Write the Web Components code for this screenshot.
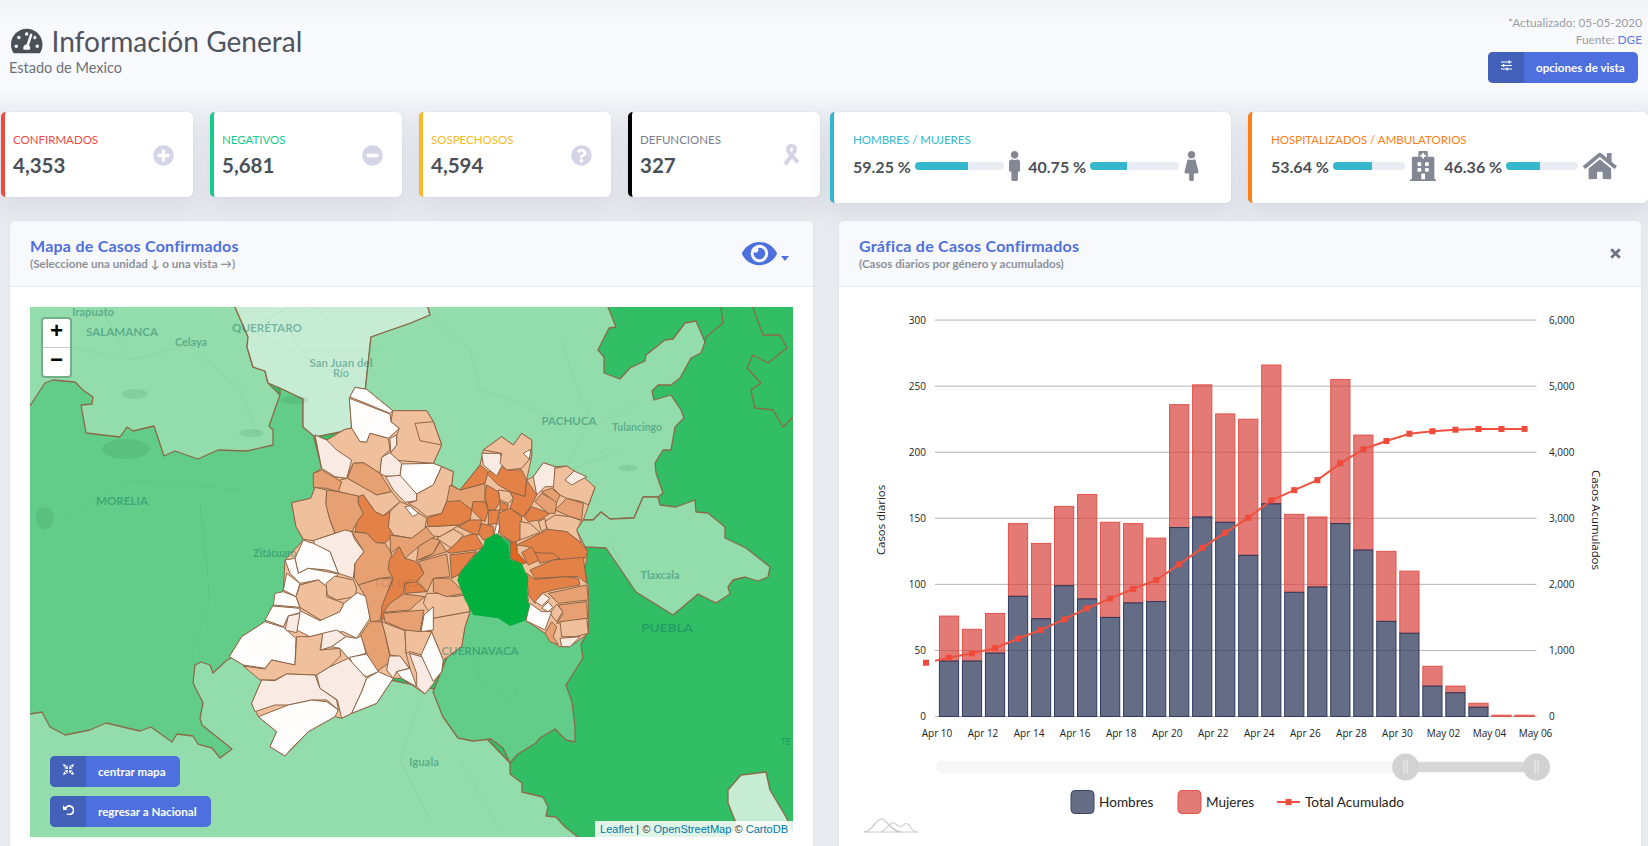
<!DOCTYPE html>
<html lang="es">
<head>
<meta charset="utf-8">
<title>Información General</title>
<style>
    html, body { margin: 0; height: 846px; overflow: hidden; }
    body {
        font-family: "Lato", "Noto Sans", sans-serif;
        color: #495057;
        background: linear-gradient(#f1f2f6 0, #f8f9fc 24px, #f9fafd 85px, #eff0f5 112px, #e8eaef 210px, #e8eaef 100%);
    }
</style>
</head>
<body>
<app-header></app-header>
<div id="cards" style="display:flex;align-items:flex-start;padding-left:1px;width:1647px">
    <stat-card label="CONFIRMADOS" value="4,353" color="#f0493e" icon="plus" style="margin-right:17px"></stat-card>
    <stat-card label="NEGATIVOS" value="5,681" color="#17c98b" icon="minus" style="margin-right:17px"></stat-card>
    <stat-card label="SOSPECHOSOS" value="4,594" color="#f7b924" icon="question" style="margin-right:17px"></stat-card>
    <stat-card label="DEFUNCIONES" value="327" color="#000" text="#7b7e8a" icon="ribbon" style="margin-right:10px"></stat-card>
    <ratio-card label="HOMBRES / MUJERES" color="#30b8d0" a="59.25" b="40.75" ia="male" ib="female" w="89" g2="8" pad="19" style="width:401px;margin-right:17px"></ratio-card>
    <ratio-card label="HOSPITALIZADOS / AMBULATORIOS" color="#fd7e14" a="53.64" b="46.36" ia="hospital" ib="home" w="72" g2="8" pad="19" style="width:400px"></ratio-card>
</div>
<div style="display:grid;grid-template-columns:803px 802px;column-gap:26px;padding:18px 0 0 10px">
    <panel-card heading="Mapa de Casos Confirmados" sub="(Seleccione una unidad ↓ o una vista →)" action="eye"><map-view></map-view></panel-card>
    <panel-card heading="Gráfica de Casos Confirmados" sub="(Casos diarios por género y acumulados)" action="close"><case-chart></case-chart></panel-card>
</div>

<script>
const ICONS = {
    gauge: ['0 0 576 512', 'M288 32C128.94 32 0 160.94 0 320c0 52.8 14.25 102.26 39.06 144.8 5.61 9.62 16.3 15.2 27.44 15.2h443c11.14 0 21.83-5.58 27.44-15.2C561.75 422.26 576 372.8 576 320c0-159.06-128.94-288-288-288zm0 64c14.71 0 26.58 10.13 30.32 23.65-1.11 2.26-2.64 4.23-3.45 6.67l-9.22 27.67c-5.13 3.49-10.97 6.01-17.64 6.01-17.67 0-32-14.33-32-32S270.33 96 288 96zM96 384c-17.67 0-32-14.33-32-32s14.33-32 32-32 32 14.33 32 32-14.33 32-32 32zm48-160c-17.67 0-32-14.33-32-32s14.33-32 32-32 32 14.33 32 32-14.33 32-32 32zm246.77-72.41l-61.33 184C343.13 347.33 352 364.54 352 384c0 11.72-3.38 22.55-8.88 32H232.88c-5.5-9.45-8.88-20.28-8.88-32 0-33.94 26.5-61.43 59.9-63.59l61.34-184.01c4.17-12.56 17.73-19.45 30.36-15.17 12.57 4.19 19.35 17.79 15.17 30.36zm14.66 57.2l15.52-46.55c3.47-1.29 7.13-2.23 11.05-2.23 17.67 0 32 14.33 32 32s-14.33 32-32 32c-11.38-.01-20.89-6.28-26.57-15.22zM480 384c-17.67 0-32-14.33-32-32s14.33-32 32-32 32 14.33 32 32-14.33 32-32 32z'],
    plus: ['0 0 512 512', 'M256 8C119 8 8 119 8 256s111 248 248 248 248-111 248-248S393 8 256 8zm144 276c0 6.6-5.4 12-12 12h-92v92c0 6.6-5.4 12-12 12h-56c-6.6 0-12-5.4-12-12v-92h-92c-6.6 0-12-5.4-12-12v-56c0-6.6 5.4-12 12-12h92v-92c0-6.6 5.4-12 12-12h56c6.6 0 12 5.4 12 12v92h92c6.6 0 12 5.4 12 12v56z'],
    minus: ['0 0 512 512', 'M256 8C119 8 8 119 8 256s111 248 248 248 248-111 248-248S393 8 256 8zM124 296c-6.6 0-12-5.4-12-12v-56c0-6.6 5.4-12 12-12h264c6.6 0 12 5.4 12 12v56c0 6.6-5.4 12-12 12H124z'],
    question: ['0 0 512 512', 'M504 256c0 136.997-111.043 248-248 248S8 392.997 8 256C8 119.083 119.043 8 256 8s248 111.083 248 248zM262.655 90c-54.497 0-89.255 22.957-116.549 63.758-3.536 5.286-2.353 12.415 2.715 16.258l34.699 26.31c5.205 3.947 12.621 3.008 16.665-2.122 17.864-22.658 30.113-35.797 57.303-35.797 20.429 0 45.698 13.148 45.698 32.958 0 14.976-12.363 22.667-32.534 33.976C247.128 238.528 216 254.941 216 296v4c0 6.627 5.373 12 12 12h56c6.627 0 12-5.373 12-12v-1.333c0-28.462 83.186-29.647 83.186-106.667 0-58.002-60.165-102-116.531-102zM256 338c-25.365 0-46 20.635-46 46 0 25.364 20.635 46 46 46s46-20.636 46-46c0-25.365-20.635-46-46-46z'],
    eye: ['0 0 576 512', 'M572.52 241.4C518.29 135.59 410.93 64 288 64S57.68 135.64 3.48 241.41a32.35 32.35 0 0 0 0 29.19C57.71 376.41 165.07 448 288 448s230.32-71.64 284.52-177.41a32.35 32.35 0 0 0 0-29.19zM288 400a144 144 0 1 1 144-144 143.93 143.93 0 0 1-144 144zm0-240a95.31 95.31 0 0 0-25.31 3.79 47.85 47.85 0 0 1-66.9 66.9A95.78 95.78 0 1 0 288 160z'],
    hospital: ['0 0 448 512', 'M448 492v20H0v-20c0-6.627 5.373-12 12-12h20V120c0-13.255 10.745-24 24-24h88V24c0-13.255 10.745-24 24-24h112c13.255 0 24 10.745 24 24v72h88c13.255 0 24 10.745 24 24v360h20c6.627 0 12 5.373 12 12zM308 192h-40c-6.627 0-12 5.373-12 12v40c0 6.627 5.373 12 12 12h40c6.627 0 12-5.373 12-12v-40c0-6.627-5.373-12-12-12zm-168 64h40c6.627 0 12-5.373 12-12v-40c0-6.627-5.373-12-12-12h-40c-6.627 0-12 5.373-12 12v40c0 6.627 5.373 12 12 12zm104 128h-40c-6.627 0-12 5.373-12 12v84h64v-84c0-6.627-5.373-12-12-12zm64-96h-40c-6.627 0-12 5.373-12 12v40c0 6.627 5.373 12 12 12h40c6.627 0 12-5.373 12-12v-40c0-6.627-5.373-12-12-12zm-116 12c0-6.627-5.373-12-12-12h-40c-6.627 0-12 5.373-12 12v40c0 6.627 5.373 12 12 12h40c6.627 0 12-5.373 12-12v-40zM182 96h26v26a6 6 0 0 0 6 6h20a6 6 0 0 0 6-6V96h26a6 6 0 0 0 6-6V70a6 6 0 0 0-6-6h-26V38a6 6 0 0 0-6-6h-20a6 6 0 0 0-6 6v26h-26a6 6 0 0 0-6 6v20a6 6 0 0 0 6 6z'],
    home: ['0 0 576 512', 'M280.37 148.26L96 300.11V464a16 16 0 0 0 16 16l112.06-.29a16 16 0 0 0 15.92-16V368a16 16 0 0 1 16-16h64a16 16 0 0 1 16 16v95.64a16 16 0 0 0 16 16.05L464 480a16 16 0 0 0 16-16V300L295.67 148.26a12.19 12.19 0 0 0-15.3 0zM571.6 251.47L488 182.56V44.05a12 12 0 0 0-12-12h-56a12 12 0 0 0-12 12v72.61L318.47 43a48 48 0 0 0-61 0L4.34 251.47a12 12 0 0 0-1.6 16.9l25.5 31A12 12 0 0 0 45.15 301l235.22-193.74a12.19 12.19 0 0 1 15.3 0L530.9 301a12 12 0 0 0 16.9-1.6l25.5-31a12 12 0 0 0-1.7-16.93z'],
    male: ['0 0 192 512', 'M96 0c35.346 0 64 28.654 64 64s-28.654 64-64 64-64-28.654-64-64S60.654 0 96 0m48 144h-11.36c-22.711 10.443-49.59 10.894-73.28 0H48c-26.51 0-48 21.49-48 48v136c0 13.255 10.745 24 24 24h16v136c0 13.255 10.745 24 24 24h64c13.255 0 24-10.745 24-24V352h16c13.255 0 24-10.745 24-24V192c0-26.51-21.49-48-48-48z'],
    female: ['0 0 256 512', 'M128 0c35.346 0 64 28.654 64 64s-28.654 64-64 64c-35.346 0-64-28.654-64-64S92.654 0 128 0m119.283 354.179l-48-192A24 24 0 0 0 176 144h-11.36c-22.711 10.443-49.59 10.894-73.28 0H80a24 24 0 0 0-23.283 18.179l-48 192C4.935 369.305 16.383 384 32 384h56v104c0 13.255 10.745 24 24 24h32c13.255 0 24-10.745 24-24V384h56c15.591 0 27.071-14.671 23.283-29.821z']
}

function icon(name, height, color) {
    const [box, d] = ICONS[name]
    const p = box.split(' ')
    return `<svg width="${height * p[2] / p[3]}" height="${height}" viewBox="${box}" style="display:block;flex:none"><path fill="${color}" d="${d}"/></svg>`
}

const RIBBON = `<svg width="19" height="22" viewBox="0 0 19 22" style="display:block"><path d="M3 20.5L11.5 9C14 5.5 13.5 2 9.5 2S5 5.5 7.5 9L16 18.5" fill="none" stroke="#d3d5e6" stroke-width="4"/></svg>`

class AppHeader extends HTMLElement {
    constructor() {
        super()
        this.attachShadow({ mode: 'open' })
        this.shadowRoot.innerHTML = `
        <style>
            :host { display: flex; justify-content: space-between; height: 112px; box-sizing: border-box; }
            .left { padding: 25px 0 0 9px; }
            h1 { display: flex; align-items: center; gap: 9px; margin: 0 0 0 2px; font-size: 28.1px; line-height: 32px; font-weight: 400; color: #4f555e; }
            .sub { font-size: 14.5px; line-height: 18px; margin-top: 2px; color: #6a7079; }
            .right { display: flex; flex-direction: column; align-items: flex-end; padding: 14px 6px 0 0; font-size: 11.8px; line-height: 17px; color: #9a9da6; }
            .right b { font-weight: 400; color: #5c7ce8; }
            icon-button { margin: 4px 4px 0 0; }
        </style>
        <div class="left">
            <h1>${icon('gauge', 28, '#495057')}<span>Información General</span></h1>
            <div class="sub">Estado de Mexico</div>
        </div>
        <div class="right">
            <div>*Actualizado: 05-05-2020</div>
            <div>Fuente: <b>DGE</b></div>
            <icon-button icon="sliders" width="150">opciones de vista</icon-button>
        </div>`
    }
}
customElements.define('app-header', AppHeader)

const BTN_ICONS = {
    sliders: `<path d="M0 2h11M0 5.5h11M0 9h11" stroke="#fff" stroke-width="1.1"/><path d="M7.5 .5h1.4v3H7.5zM2 4h1.4v3H2zM5.5 7.5h1.4v3H5.5z" fill="#fff"/>`,
    center: `<path d="M0 0l3.6 1.2L1.2 3.6zM11 0L7.4 1.2l2.4 2.4zM0 11l3.6-1.2-2.4-2.4zM11 11l-3.6-1.2 2.4-2.4z" fill="#fff"/><path d="M4.4 1.5l.6 3.5-3.5-.6zM6.6 1.5L6 5l3.5-.6zM4.4 9.5L5 6l-3.5.6zM6.6 9.5L6 6l3.5.6z" fill="#fff"/>`,
    undo: `<path d="M2 5.8A4.3 4.3 0 1 1 4 9.9" fill="none" stroke="#fff" stroke-width="1.7"/><path d="M0 1.2v4.6h4.6z" fill="#fff"/>`
}

class IconButton extends HTMLElement {
    constructor() {
        super()
        this.attachShadow({ mode: 'open' })
    }
    connectedCallback() {
        const w = this.getAttribute('width')
        this.shadowRoot.innerHTML = `
        <style>
            :host { display: block; width: ${w}px; height: 31px; }
            div { display: flex; height: 100%; border-radius: 5px; overflow: hidden; background: #4e70de; color: #fff;
                  font-size: 11.6px; font-weight: 700; align-items: center; white-space: nowrap; }
            i { display: flex; justify-content: center; align-items: flex-start; box-sizing: border-box; padding-top: 8px; width: 36px; height: 100%; background: #4361b9; margin-right: 12px; }
        </style>
        <div><i><svg width="11" height="11" viewBox="0 0 11 11">${BTN_ICONS[this.getAttribute('icon')]}</svg></i><slot></slot></div>`
    }
}
customElements.define('icon-button', IconButton)

class StatCard extends HTMLElement {
    constructor() {
        super()
        this.attachShadow({ mode: 'open' })
    }
    connectedCallback() {
        const color = this.getAttribute('color')
        const name = this.getAttribute('icon')
        const ic = name == 'ribbon' ? RIBBON : icon(name, 21, '#d3d5e6')
        this.shadowRoot.innerHTML = `
        <style>
            :host { display: flex; flex: none; box-sizing: border-box; width: 192px; height: 85px; background: #fff; border-radius: 5px;
                    border-left: 4px solid ${color}; box-shadow: 0 8px 24px rgba(60,70,110,.10), 0 0 1px rgba(60,70,110,.3); align-items: center;
                    justify-content: space-between; padding: 0 19px 0 8px; }
            .label { font-size: 11.5px; line-height: 14px; color: ${this.getAttribute('text') || color}; }
            .value { font-size: 20.5px; line-height: 24px; font-weight: 700; margin-top: 6px; color: #495057; }
            .ic { margin-top: 1px; }
        </style>
        <div><div class="label">${this.getAttribute('label')}</div><div class="value">${this.getAttribute('value')}</div></div>
        <div class="ic">${ic}</div>`
    }
}
customElements.define('stat-card', StatCard)

class RatioCard extends HTMLElement {
    constructor() {
        super()
        this.attachShadow({ mode: 'open' })
    }
    part(value, ic, w, gap) {
        return `<span class="pct">${value} %</span>
        <span class="bar" style="width:${w}px"><span style="width:${value}%"></span></span>
        <span style="margin:0 ${gap}px 0 5px">${icon(ic, 30, '#848794')}</span>`
    }
    connectedCallback() {
        const color = this.getAttribute('color')
        const w = this.getAttribute('w')
        this.shadowRoot.innerHTML = `
        <style>
            :host { display: block; flex: none; box-sizing: border-box; height: 91px; background: #fff; border-radius: 5px;
                    border-left: 4px solid ${color}; box-shadow: 0 8px 24px rgba(60,70,110,.10), 0 0 1px rgba(60,70,110,.3);
                    padding: 21px 0 0 ${this.getAttribute('pad')}px; }
            .label { font-size: 11.5px; line-height: 14px; color: ${color}; }
            .row { display: flex; align-items: center; margin-top: 1px; height: 36px; }
            .pct { font-size: 16px; font-weight: 700; color: #495057; width: 57px; white-space: nowrap; }
            .bar { display: block; height: 8px; margin-left: 5px; border-radius: 4px; background: #e9ecf3; overflow: hidden; flex: none; }
            .bar span { display: block; height: 100%; background: #35b8cd; }
        </style>
        <div class="label">${this.getAttribute('label')}</div>
        <div class="row">
            ${this.part(this.getAttribute('a'), this.getAttribute('ia'), w, this.getAttribute('g2'))}
            ${this.part(this.getAttribute('b'), this.getAttribute('ib'), w, 0)}
        </div>`
    }
}
customElements.define('ratio-card', RatioCard)

class PanelCard extends HTMLElement {
    constructor() {
        super()
        this.attachShadow({ mode: 'open' })
    }
    connectedCallback() {
        const action = this.getAttribute('action') == 'eye'
            ? `<div class="act eye">${icon('eye', 31, '#4e6fde')}<svg width="8" height="5" viewBox="0 0 8 5" style="margin:18px 0 0 4px"><path d="M0 0h8L4 5z" fill="#4e6fde"/></svg></div>`
            : `<div class="act close"><svg width="11" height="11" viewBox="0 0 11 11"><path d="M1.2 1.2l8.6 8.6M9.8 1.2L1.2 9.8" stroke="#6f7482" stroke-width="2.8"/></svg></div>`
        this.shadowRoot.innerHTML = `
        <style>
            :host { display: block; background: #fff; border-radius: 5px 5px 0 0; box-shadow: 0 0 1px rgba(60,70,110,.3); height: 625px; overflow: hidden; }
            header { display: flex; justify-content: space-between; align-items: center; box-sizing: border-box; height: 66px; padding: 0 20px; background: #f8f9fd; border-bottom: 1px solid #e4e6f0; }
            h2 { margin: 0; font-size: 16px; line-height: 18px; font-weight: 700; color: #4e6fde; letter-spacing: .25px; }
            p { margin: 2px 0 0; font-size: 11.6px; line-height: 14px; font-weight: 700; color: #8e9198; }
            .act { display: flex; }
            .eye { margin: 0 4px 0 0; }
        </style>
        <header><div><h2>${this.getAttribute('heading')}</h2><p>${this.getAttribute('sub')}</p></div>${action}</header>
        <slot></slot>`
    }
}
customElements.define('panel-card', PanelCard)

const w = '#fefdfc', p = '#f9ebe3', l = '#f0bf9c', m = '#e6a071', d = '#e38146', x = '#e0651f'

// municipios, coordenadas del recorte 1200x1200 que empieza en (220,370)
const MUNICIPIOS = [
    [w,'405,52 440,58 518,122 510,130 400,85 390,80'],
    [w,'388,85 510,132 513,155 538,175 505,205 450,190 440,217 420,215 395,175'],
    [l,'518,122 620,122 640,155 665,225 640,280 520,270 512,248 530,225 530,195 538,175 513,155'],
    [l,'585,160 640,155 665,225 600,212'],
    [l,'320,210 375,178 395,175 420,215 440,217 450,190 505,205 510,240 485,262 480,310 430,278 400,280 380,325 345,320'],
    [p,'285,195 320,210 350,240 395,270 380,325 345,320 305,295'],
    [p,'510,205 530,195 530,225 512,248'],
    [p,'510,248 545,280 540,320 495,318 480,310 485,262'],
    [w,'545,282 640,280 665,290 640,345 590,372 540,320'],
    [p,'497,320 540,316 590,372 590,392 555,397 520,360'],
    [l,'665,290 700,305 695,345 680,395 665,430 620,440 590,415 565,400 590,392 590,372 640,345'],
    [m,'400,280 430,278 480,310 515,365 470,375 382,325'],
    [l,'360,330 382,325 470,375 515,365 540,395 490,437 465,425 430,375 415,380 355,365'],
    [m,'280,310 305,300 365,335 355,365 320,355 280,352'],
    [l,'215,398 272,385 285,352 320,360 318,400 330,450 345,490 280,512 250,508 228,470'],
    [m,'320,360 355,365 415,378 415,400 430,430 410,460 395,485 345,488 330,450 318,405'],
    [d,'415,380 430,375 465,425 490,437 510,425 520,430 505,470 520,495 495,520 468,518 440,490 405,485 410,458 430,430 415,400'],
    [l,'510,425 540,395 565,405 590,425 620,445 615,475 575,505 520,495 505,470'],
    [w,'555,410 570,408 595,430 578,440'],
    [p,'280,512 345,490 375,480 395,485 405,510 432,545 405,580 400,625 355,610 330,545 285,525'],
    [w,'262,515 280,520 330,545 355,610 320,600 265,595 235,610 225,565 250,510'],
    [m,'395,485 440,490 468,518 495,520 515,550 505,600 520,620 480,625 415,645 403,625 405,580 432,545'],
    [w,'195,570 225,565 235,610 265,595 320,605 355,612 320,650 295,630 240,640 210,610'],
    [w,'200,610 240,640 228,680 190,660'],
    [w,'165,670 190,665 228,680 240,712 160,705'],
    [l,'228,680 240,645 295,630 320,650 320,680 345,690 372,700 360,725 305,752 240,712'],
    [l,'318,640 345,618 400,630 410,655 405,680 350,690 322,675'],
    [w,'230,780 235,735 240,722 300,752 360,725 372,700 412,668 440,680 450,745 410,805 370,785 310,790 270,800'],
    [w,'158,708 240,715 240,728 205,738 190,770 135,750'],
    [p,'205,738 240,730 230,788 195,780'],
    [w,'28,860 65,800 135,755 190,772 228,805 225,885 155,870 135,895 70,885'],
    [l,'70,888 135,897 155,870 225,885 230,800 270,800 310,790 300,840 360,835 362,858 330,890 290,915 200,912 165,930 120,930'],
    [p,'308,790 350,780 378,800 335,830 302,840'],
    [w,'378,800 410,805 425,797 438,850 385,865 360,835 335,830'],
    [m,'450,755 485,755 495,790 510,860 505,880 470,905 440,850 422,795'],
    [l,'485,755 555,782 558,850 570,895 540,860 510,855 495,790'],
    [l,'555,780 635,785 605,855 570,845 558,850'],
    [w,'388,862 440,852 475,905 440,920 408,900'],
    [p,'508,858 540,858 568,895 530,905 520,925 500,900'],
    [p,'568,850 605,860 645,935 615,972 590,950 590,910'],
    [w,'635,785 670,870 665,905 640,935 603,855'],
    [w,'530,905 570,895 590,950 545,925'],
    [p,'125,930 165,932 200,912 285,915 300,955 350,990 355,1020 320,990 275,990 205,1005 165,1005 105,1025 95,1000'],
    [p,'290,915 330,890 385,865 440,925 425,965 395,1030 365,1045 352,990 300,955'],
    [w,'440,925 475,905 520,925 470,1000 395,1030 425,965'],
    [w,'115,1040 205,1005 275,990 320,995 355,1020 345,1040 265,1085 215,1135 195,1158 150,1130 170,1085'],
    [m,'415,645 480,625 518,625 490,700 480,752 452,755 437,680'],
    [d,'508,570 538,530 555,565 590,575 612,610 585,640 555,640 550,670 515,700 485,755 485,710 520,625 505,600'],
    [d,'555,640 590,635 620,665 555,670'],
    [m,'510,700 550,672 615,680 590,700 570,720 490,727'],
    [m,'490,730 612,720 600,785 555,780 495,755'],
    [l,'620,670 660,670 700,680 740,675 750,725 640,745 610,700'],
    [l,'640,745 750,725 735,770 725,830 670,870 635,785 640,760'],
    [w,'612,735 640,710 640,780 603,785'],
    [m,'640,625 690,625 735,670 680,680 640,665'],
    [m,'595,575 680,552 690,620 640,625 622,665 590,635 612,610'],
    [m,'510,495 575,505 620,470 645,500 595,530 555,565 538,530 512,550'],
    [m,'595,530 635,505 660,510 640,550 590,572'],
    [m,'640,550 660,515 680,545 600,570'],
    [l,'618,470 720,465 660,500 640,498'],
    [l,'650,505 700,478 730,495 695,535'],
    [d,'680,545 730,500 765,490 790,530 770,540 690,550'],
    [d,'690,555 770,545 750,570 715,615 695,625'],
    [d,'620,445 665,430 680,395 720,390 755,420 750,450 715,465 625,470'],
    [m,'680,395 690,345 720,360 795,340 795,400 760,395 755,420 720,392'],
    [d,'720,360 780,285 805,305 795,340'],
    [d,'715,470 750,450 785,450 775,495 755,490'],
    [d,'755,420 760,395 795,395 805,420 795,455 785,450'],
    [d,'775,490 785,460 820,470 820,505 790,510'],
    [w,'820,505 830,460 840,465 835,490'],
    [d,'800,310 840,285 860,300 905,300 920,330 915,380 870,365 835,345'],
    [p,'785,250 840,250 850,280 830,318 790,285'],
    [l,'790,240 845,200 880,225 905,190 935,210 935,260 905,295 860,300 840,280 845,250'],
    [w,'910,250 932,238 928,268'],
    [l,'835,360 870,365 880,385 865,400 840,390'],
    [d,'870,365 915,380 920,330 950,375 935,405 910,440 870,415 880,385'],
    [d,'800,345 835,365 840,395 825,420 805,420 795,380'],
    [d,'840,395 865,405 860,420 840,420'],
    [d,'805,422 840,420 830,460 805,465'],
    [d,'835,430 870,415 905,440 900,510 880,518 840,490'],
    [x,'872,515 890,518 892,548 920,578 905,582 872,565'],
    [l,'900,455 930,460 960,487 900,510'],
    [l,'955,455 975,445 980,475 965,485'],
    [d,'912,440 935,410 990,430 960,450 925,455'],
    [m,'945,395 965,370 1010,395 1005,430 985,430'],
    [m,'965,365 995,355 1020,375 1010,398'],
    [p,'940,320 970,278 1005,290 1005,350 975,350 950,375'],
    [l,'1005,295 1040,288 1090,320 1125,352 1105,405 1085,395 1040,385 1020,375 1000,355'],
    [p,'1035,330 1062,303 1100,320 1055,345'],
    [m,'1005,420 1040,385 1090,400 1085,450 1050,440'],
    [l,'975,455 1005,435 1050,440 1085,452 1070,480 1085,520 1040,485 985,480 980,470'],
    [d,'890,525 960,490 985,478 1040,485 1085,520 1103,545 1095,565 1020,570 960,550 945,548 925,530'],
    [d,'905,548 935,530 958,570 925,585'],
    [d,'945,548 1000,550 1020,565 960,580'],
    [d,'930,600 1000,570 1090,562 1100,640 1075,620 1040,620 945,625'],
    [d,'920,610 945,628 1040,620 1075,625 1080,645 1000,660 965,670 945,700 925,675'],
    [m,'985,670 1100,645 1105,690 1015,700'],
    [m,'1015,705 1100,695 1103,745 1040,755 1010,760 1030,730'],
    [l,'1020,755 1100,745 1105,790 1065,800 1025,800'],
    [p,'1020,805 1080,800 1050,830 1025,830'],
    [m,'995,755 1010,770 1000,800 1015,825 990,815 975,790'],
    [l,'1010,702 1028,725 1010,755 990,730'],
    [w,'930,700 965,725 995,725 975,780 918,752'],
    [p,'968,670 990,685 965,708 945,695'],
    [w,'965,715 985,695 998,712 985,725']
]
const EDOMEX = '405,52 440,58 518,122 620,122 640,155 665,225 640,280 665,290 700,305 695,345 720,360 780,285 790,240 845,200 880,225 905,190 935,210 935,260 920,330 940,320 970,278 1005,290 1040,288 1125,352 1090,450 1070,480 1103,545 1095,600 1105,650 1105,790 1050,830 1015,830 975,790 918,752 925,690 905,582 872,515 830,490 790,530 750,570 715,615 750,725 735,770 725,830 670,870 665,905 615,972 545,925 520,925 470,1000 395,1030 365,1045 345,1040 265,1085 195,1158 150,1130 170,1085 115,1040 95,1000 125,930 70,885 28,860 65,800 135,755 160,705 190,660 195,570 250,510 228,470 215,398 272,385 285,352 280,310 305,295 285,195 320,210 375,178 395,175 388,85'
const CDMX = '830,490 865,525 870,570 905,580 925,625 920,690 930,705 915,752 870,768 835,745 760,735 735,690 712,630 725,600 755,570 790,530 795,508'

// estados vecinos, en coordenadas de pagina
const ESTADOS = [
    ['#93dcab','20,700 200,650 240,650 440,690 510,763 510,774 522,783 522,792 543,797 548,807 546,816 556,817 565,827 578,837 590,847 20,847'],
    ['#62cd88','433,692 443,717 458,738 473,741 491,739 503,748 510,763 518,754 536,743 540,738 555,729 566,740 575,742 575,727 572,702 566,685 583,658 581,645 586,635 586,600 470,600'],
    ['#93dcab','20,297 235,297 235,307 248,337 247,347 253,367 265,371 268,383 280,395 300,460 20,460'],
    ['#62cd88','20,406 30,406 45,383 53,380 75,382 83,390 93,397 92,404 81,405 86,433 120,437 127,427 133,431 154,426 164,456 175,451 198,459 218,450 247,451 273,445 273,430 269,426 280,395 280,388 303,399 303,427 313,433 322,470 330,560 300,620 227,660 213,673 210,665 201,662 195,665 193,683 203,703 200,718 202,725 232,749 220,758 212,748 198,744 193,736 177,734 172,742 151,727 140,731 106,723 90,730 65,735 50,727 42,712 30,714 20,716'],
    ['#c6ecd4','235,297 428,297 428,307 430,315 411,323 371,337 365,392 350,430 315,437 303,427 303,399 280,388 268,383 265,371 253,367 247,347 248,337 235,307'],
    ['#93dcab','428,297 608,297 608,307 616,327 609,328 598,350 604,357 604,373 620,379 630,368 645,361 646,355 665,340 673,339 685,323 696,321 705,342 701,353 691,358 680,378 671,385 658,385 652,391 654,400 671,395 681,410 684,418 675,427 671,450 663,450 655,463 656,473 663,493 658,497 643,497 634,518 610,519 601,512 593,520 583,520 560,530 470,540 345,470 365,392 371,337 411,323 430,315 428,307'],
    ['#93dcab','576,527 583,520 593,520 601,512 610,519 634,518 643,497 658,497 660,505 676,507 695,500 696,512 708,513 725,527 725,538 746,548 770,567 768,577 758,581 745,577 733,580 728,587 730,594 716,603 698,594 673,615 636,592 621,570 606,548 586,547 560,540'],
    ['#c6ecd4','728,790 741,775 766,772 770,790 786,817 800,845 725,845 736,823 728,803']
]
const LIMITES = [
    '720,300 723,323 706,337 705,342',
    '750,300 763,335 780,335 787,348 768,363 753,355 747,368 761,383 751,390 755,408 773,410 783,427 800,410'
]
const CAMINOS = [
    '100,307 130,360 190,345 240,390 260,440', '40,340 130,360', '250,330 330,370 365,392', '280,310 300,350 380,350',
    '430,315 470,350 480,390 510,400 590,430 640,400', '560,340 590,420 560,480', '620,450 570,470', '610,540 650,640',
    '470,640 480,680 510,700 540,660', '60,520 130,480 240,490', '200,500 210,600 190,660', '420,700 400,760 430,820', '460,760 500,830',
    '640,640 720,690 670,740', '330,320 300,300 250,330'
]
const LAGOS = [[135,394,13,5],[126,449,24,10],[45,518,9,11],[295,400,14,4],[251,433,12,4],[628,468,10,3]]
const ETIQUETAS = [
    ['Irapuato',93,315.5,42,10.5],['SALAMANCA',122,336,72,11],['Celaya',191,346,32,11],['QUERÉTARO',267,332,70,11],
    ['San Juan del',341,367,63,11],['Río',341,377,16,11],['MORELIA',122,505,52,11],['Zitácuaro',275,557,43,10.5],
    ['PACHUCA',569,425,55,11],['Tulancingo',637,431,50,10.5],['Tlaxcala',660,579,39,10.5],['PUEBLA',667,632,52,12],
    ['CUERNAVACA',480,655,77,11],['Iguala',424,766,30,10.5],['TE',786,745,10,10]
]

class MapView extends HTMLElement {
    constructor() {
        super()
        this.attachShadow({ mode: 'open' })
    }
    connectedCallback() {
        const poly = (pts, fill) => `<polygon points="${pts}" fill="${fill}"/>`
        const states = ESTADOS.map(s => poly(s[1], s[0])).join('')
        const limits = LIMITES.map(s => `<polyline points="${s}" fill="none"/>`).join('')
        const roads = CAMINOS.map(s => `<polyline points="${s}"/>`).join('')
        const lakes = LAGOS.map(a => `<ellipse cx="${a[0]}" cy="${a[1]}" rx="${a[2]}" ry="${a[3]}"/>`).join('')
        const munis = MUNICIPIOS.map(s => poly(s[1], s[0])).join('')
        const labels = ETIQUETAS.map(t => `<text x="${t[1]}" y="${t[2]}" font-size="${t[4]}" textLength="${t[3]}" lengthAdjust="spacingAndGlyphs">${t[0]}</text>`).join('')
        this.shadowRoot.innerHTML = `
        <style>
            :host { display: block; padding: 20px; }
            .map { position: relative; width: 763px; height: 530px; overflow: hidden; background: #31be65; }
            svg { display: block; }
            .zoom { position: absolute; left: 11px; top: 10px; width: 27px; border: 2px solid rgba(0,0,0,.2); border-radius: 4px; background: #fff; background-clip: padding-box; }
            .zoom div { height: 28px; text-align: center; font: 700 22px/27px "Liberation Mono", monospace; color: #000; }
            .zoom div + div { border-top: 1px solid #ccc; }
            .btns { position: absolute; left: 20px; top: 449px; display: flex; flex-direction: column; gap: 9px; }
            .attr { position: absolute; right: 0; bottom: 0; box-sizing: border-box; width: 198px; height: 16px; padding-left: 5px; background: rgba(255,255,255,.85); font: 11.05px/16px "Liberation Sans", sans-serif; color: #333; white-space: nowrap; }
            .attr a { color: #0078a8; }
        </style>
        <div class="map">
            <svg width="763" height="530" viewBox="30 307 763 530">
                <g stroke="#8b6a4a" stroke-width="1.3" stroke-linejoin="round">${states}${limits}</g>
                <g fill="none" stroke="rgba(0,70,60,.05)" stroke-width="1">${roads}</g>
                <g fill="rgba(0,70,60,.09)">${lakes}</g>
                <g transform="translate(220,370) scale(.33333)" stroke-linejoin="round" stroke="#8e6546" stroke-width="3">
                    ${poly(EDOMEX, l)}
                    <g>${munis}</g>
                    ${poly(CDMX, '#02b03f').replace('<polygon', '<polygon stroke="none"')}
                </g>
                <g font-family="Lato, 'Noto Sans', sans-serif" font-weight="700" text-anchor="middle" fill="rgba(15,115,100,.45)">${labels}
                    <text x="398" y="587" font-size="11" textLength="50" lengthAdjust="spacingAndGlyphs" fill="rgba(120,80,50,.16)">TOLUCA</text>
                </g>
            </svg>
            <div class="zoom"><div>+</div><div>−</div></div>
            <div class="btns">
                <icon-button icon="center" width="130">centrar mapa</icon-button>
                <icon-button icon="undo" width="161">regresar a Nacional</icon-button>
            </div>
            <div class="attr"><a>Leaflet</a> | © <a>OpenStreetMap</a> © <a>CartoDB</a></div>
        </div>`
    }
}
customElements.define('map-view', MapView)

const TOTALES = [76,66,78,146,131,159,168,147,146,135,236,251,229,225,266,153,151,255,213,125,110,38,23,10,1,1]
const HOMBRES = [42,42,48,91,74,99,89,75,86,87,143,151,147,122,161,94,98,146,126,72,63,23,18,7,0,0]

class CaseChart extends HTMLElement {
    constructor() {
        super()
        this.attachShadow({ mode: 'open' })
    }
    connectedCallback() {
        const y0 = 716.5, k = 396.4 / 300, step = 23.02, left = 949
        let out = ''
        // rejilla y ejes
        for (let i = 0; i <= 6; i++) {
            const y = y0 - i * 66.07
            out += `<line x1="935" x2="1536.5" y1="${y}" y2="${y}" stroke="#b4b4b4"/>`
            out += `<text x="926" y="${y + 3.5}" text-anchor="end">${i * 50}</text>`
            out += `<text x="1549" y="${y + 3.5}">${(i * 1000).toLocaleString('en-US')}</text>`
        }
        const meses = ['Apr 10','Apr 12','Apr 14','Apr 16','Apr 18','Apr 20','Apr 22','Apr 24','Apr 26','Apr 28','Apr 30','May 02','May 04','May 06']
        meses.forEach((m, i) => {
            out += `<text x="${937 + i * 46.04}" y="737" text-anchor="middle">${m}</text>`
        })
        out += `<text transform="translate(885,520) rotate(-90)" text-anchor="middle" font-size="11.4">Casos diarios</text>`
        out += `<text transform="translate(1592,520) rotate(90)" text-anchor="middle" font-size="11.4">Casos Acumulados</text>`
        // barras
        TOTALES.forEach((t, i) => {
            const x = left + i * step - 9.6
            const h = HOMBRES[i] * k
            const top = t * k
            if (t - HOMBRES[i] > 0) out += `<rect x="${x}" y="${y0 - top}" width="19.2" height="${top - h}" fill="rgba(217,65,60,.7)" stroke="#e2524a" stroke-width="1"/>`
            if (h > 0) out += `<rect x="${x}" y="${y0 - h}" width="19.2" height="${h}" fill="rgba(58,68,100,.78)" stroke="#2f3a5e" stroke-width="1"/>`
        })
        // acumulado
        let acc = 814
        const pts = [[left - step, y0 - acc * 396.4 / 6000]]
        TOTALES.forEach((t, i) => {
            acc += t
            pts.push([left + i * step, y0 - acc * 396.4 / 6000])
        })
        out += `<clipPath id="plot"><rect x="935" y="300" width="602" height="430"/></clipPath>`
        out += `<polyline clip-path="url(#plot)" points="${pts.map(q => q.join(',')).join(' ')}" fill="none" stroke="#ef5240" stroke-width="2"/>`
        out += pts.map(q => `<rect x="${q[0] - 3}" y="${q[1] - 3}" width="6" height="6" fill="#ef4a3a"/>`).join('')
        // selector de rango
        out += `<rect x="936" y="761" width="614" height="12" rx="6" fill="#f7f7f7"/>`
        out += `<rect x="1405" y="762" width="132" height="10" fill="#d7d7d7"/>`
        for (const cx of [1405.6, 1536.5]) {
            out += `<circle cx="${cx}" cy="767" r="13.5" fill="#d2d2d2"/>`
            out += `<path d="M${cx - 1.5} 760v14M${cx + 1.5} 760v14" stroke="#eee"/>`
        }
        // leyenda
        const lg = `font-family="Lato, sans-serif" font-size="13.6"`
        out += `<rect x="1071" y="790.5" width="23" height="23" rx="4" fill="#666e85" stroke="#3a4468"/>`
        out += `<text x="1099" y="807" ${lg}>Hombres</text>`
        out += `<rect x="1178" y="790.5" width="23" height="23" rx="4" fill="#e17b75" stroke="#e2524a"/>`
        out += `<text x="1206" y="807" ${lg}>Mujeres</text>`
        out += `<path d="M1277 802h23" stroke="#ef5240" stroke-width="2"/><rect x="1285.5" y="799" width="6" height="6" fill="#ef4a3a"/>`
        out += `<text x="1305" y="807" ${lg}>Total Acumulado</text>`
        // marca del panel
        out += `<path d="M864 832h54" stroke="#dcdcdc" stroke-width="1.5"/><path d="M864 832c8 0 12-13 17-13 6 0 10 13 20 13" fill="none" stroke="#c4c4c4" stroke-width="1.2"/><path d="M880 832c6 0 8-10 14-9 3 1 4 4 7 4 3-3 6-5 8-2 2 4 4 7 9 7" fill="none" stroke="#d2d2d2" stroke-width="1.2"/>`
        this.shadowRoot.innerHTML = `
        <style>
            :host { display: block; height: 559px; }
            svg { display: block; font-family: "Open Sans", "Noto Sans", sans-serif; font-size: 10px; fill: #222; }
        </style>
        <svg width="802" height="559" viewBox="839 287 802 559">${out}</svg>`
    }
}
customElements.define('case-chart', CaseChart)
</script>
</body>
</html>
